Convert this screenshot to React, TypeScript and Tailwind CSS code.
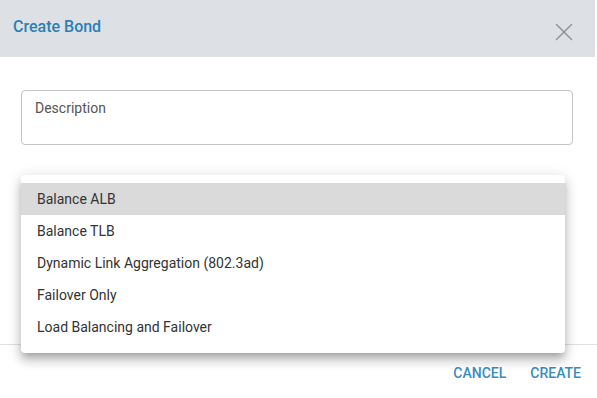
import { X } from "lucide-react";

const options = [
  "Balance ALB",
  "Balance TLB",
  "Dynamic Link Aggregation (802.3ad)",
  "Failover Only",
  "Load Balancing and Failover",
];

export default function App() {
  return (
    <div className="relative h-[398px] w-[597px] overflow-hidden bg-white font-['Roboto',sans-serif]">
      <div className="flex h-[57px] w-[595px] items-center justify-between bg-[#dde1e5] pl-[13px] pr-[16px]">
        <h1 className="mt-[-3px] text-[16px] font-medium text-[#2a7fb4]">Create Bond</h1>
        <X className="mt-[7px] h-[30px] w-[30px] text-[#8d8f91]" strokeWidth={1.1} />
      </div>

      <div className="px-[21px] pt-[33px]">
        <div className="h-[55px] w-[552px] rounded-[4px] border border-[#c4c4c4] px-[13px] pt-[7px] text-[14px] text-[#555]">
          Description
        </div>
      </div>

      <div className="mt-[199px] border-t border-[#e0e0e0]" />
      <div className="flex justify-end gap-[24px] pr-[16px] pt-[18px] text-[14px] font-medium text-[#3a8dbd]">
        <button>CANCEL</button>
        <button>CREATE</button>
      </div>

      {/* select menu */}
      <div className="absolute left-[21px] top-[175px] w-[544px] rounded-[4px] bg-white pb-[10px] pt-[8px] shadow-[0_5px_6px_-3px_rgba(0,0,0,0.2),0_8px_10px_1px_rgba(0,0,0,0.14),0_3px_14px_2px_rgba(0,0,0,0.12)]">
        {options.map((o, i) => (
          <div
            key={o}
            className={`flex h-[32px] items-center px-[16px] text-[14px] text-[#333] ${i === 0 ? "bg-[#dadada]" : ""}`}
          >
            {o}
          </div>
        ))}
      </div>
    </div>
  );
}
